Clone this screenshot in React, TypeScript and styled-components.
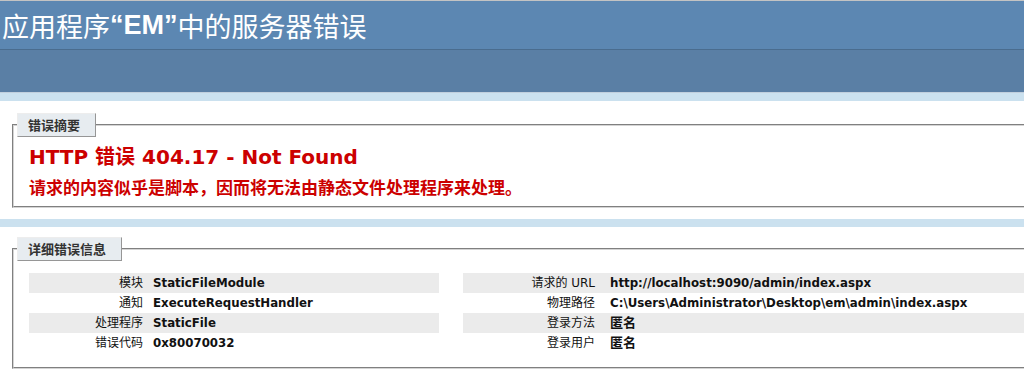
import styled, { createGlobalStyle } from "styled-components";

const GlobalStyle = createGlobalStyle`
  html, body {
    margin: 0;
    padding: 0;
  }
  body {
    background: #cbe1ef;
    font-family: "DejaVu Sans", "Noto Sans CJK SC", sans-serif;
    color: #000;
    overflow: hidden;
  }
`;

const Header = styled.h1`
  margin: 0;
  height: 48px;
  padding: 0 0 0 2px;
  display: flex;
  align-items: center;
  border-top: 1px solid #c3c3c3;
  background: #5c87b2;
  color: #fff;
  font-family: "Noto Sans CJK SC", sans-serif;
  font-size: 27px;
  font-weight: normal;
  white-space: nowrap;
`;

const AppName = styled.span`
  font-family: "Liberation Sans", "Noto Sans CJK SC", sans-serif;
  font-weight: bold;
`;

const ServerVersion = styled.div`
  height: 42px;
  background: #5a7fa5;
  border-top: 1px solid #4a6c8e;
  border-bottom: 1px solid #c1cfdd;
`;

const Container = styled.div<{ $top: number }>`
  background: #fff;
  margin-top: 8px;
  padding: ${(p) => p.$top}px 0 11px 0;
`;

const Box = styled.fieldset<{ $pad: string }>`
  margin: 0 0 0 12px;
  padding: ${(p) => p.$pad};
  border: 2px groove #d4d4d4;
  border-right: none;
  min-width: 0;
`;

const Legend = styled.legend`
  margin: 0 0 0 -12px;
  padding: 3px 15px 4px 10px;
  border-top: 1px solid #ededed;
  border-left: 1px solid #ededed;
  border-right: 1px solid #969696;
  border-bottom: 1px solid #969696;
  background: #e7ecf0;
  color: #333;
  font-family: "Noto Sans CJK SC", sans-serif;
  font-size: 13px;
  line-height: 15px;
  font-weight: bold;
`;

const ErrorTitle = styled.h2`
  margin: 0;
  color: #cc0000;
  font-size: 20px;
  line-height: 24px;
  font-weight: bold;
  white-space: nowrap;
`;

const ErrorText = styled.h3`
  margin: 8px 0 0 0;
  color: #cc0000;
  font-family: "Noto Sans CJK SC", sans-serif;
  font-size: 17px;
  line-height: 20px;
  font-weight: bold;
  white-space: nowrap;
`;

const Details = styled.div`
  display: flex;
  gap: 24px;
`;

const Table = styled.table<{ $width?: number }>`
  border-collapse: collapse;
  border: none;
  ${(p) => (p.$width ? `width: ${p.$width}px;` : "flex: 1;")}
`;

const Row = styled.tr<{ $alt?: boolean }>`
  background: ${(p) => (p.$alt ? "#ebebeb" : "transparent")};
`;

const Label = styled.th<{ $width: number; $pad: number }>`
  width: ${(p) => p.$width}px;
  padding: 3px ${(p) => p.$pad}px 3px 0;
  text-align: right;
  vertical-align: top;
  font-weight: normal;
  font-size: 12px;
  line-height: 14px;
  color: #111;
  white-space: nowrap;
`;

const Value = styled.td<{ $cjk?: boolean }>`
  padding: 3px 0;
  text-align: left;
  vertical-align: top;
  font-weight: bold;
  font-size: ${(p) => (p.$cjk ? "13px" : "11.8px")};
  line-height: 14px;
  color: #111;
  white-space: nowrap;
`;

const left = [
  ["模块", "StaticFileModule"],
  ["通知", "ExecuteRequestHandler"],
  ["处理程序", "StaticFile"],
  ["错误代码", "0x80070032"],
];

const right = [
  ["请求的 URL", "http://localhost:9090/admin/index.aspx"],
  ["物理路径", "C:\\Users\\Administrator\\Desktop\\em\\admin\\index.aspx"],
  ["登录方法", "匿名"],
  ["登录用户", "匿名"],
];

const isCjk = (s: string) => /[\u4e00-\u9fff]/.test(s);

export default function App() {
  return (
    <>
      <GlobalStyle />
      <Header>
        应用程序<AppName>“EM”</AppName>中的服务器错误
      </Header>
      <ServerVersion />
      <Container $top={12}>
        <Box $pad="8px 0 9px 15px">
          <Legend>错误摘要</Legend>
          <ErrorTitle>HTTP 错误 404.17 - Not Found</ErrorTitle>
          <ErrorText>请求的内容似乎是脚本，因而将无法由静态文件处理程序来处理。</ErrorText>
        </Box>
      </Container>
      <Container $top={10}>
        <Box $pad="12px 0 14px 15px">
          <Legend>详细错误信息</Legend>
          <Details>
            <Table $width={410}>
              <tbody>
                {left.map(([k, v], i) => (
                  <Row key={k} $alt={i % 2 === 0}>
                    <Label $width={114} $pad={10}>{k}</Label>
                    <Value>{v}</Value>
                  </Row>
                ))}
              </tbody>
            </Table>
            <Table>
              <tbody>
                {right.map(([k, v], i) => (
                  <Row key={k} $alt={i % 2 === 0}>
                    <Label $width={132} $pad={15}>{k}</Label>
                    <Value $cjk={isCjk(v)}>{v}</Value>
                  </Row>
                ))}
              </tbody>
            </Table>
          </Details>
        </Box>
      </Container>
    </>
  );
}
